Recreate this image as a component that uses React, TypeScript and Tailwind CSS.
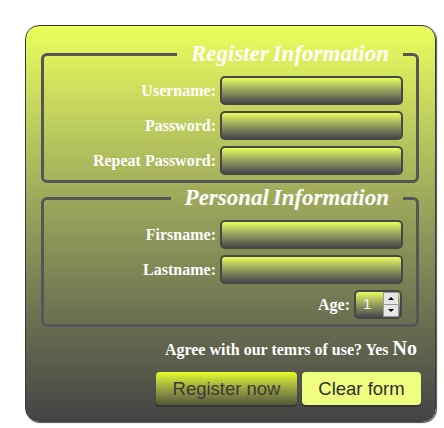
import React from "react";

const serif = "font-['Liberation_Serif','Times_New_Roman',serif]";
const sans = "font-['Liberation_Sans',Arial,sans-serif]";

function Field({ label }: { label: string }) {
  return (
    <div className="flex items-center justify-end pr-[13px]">
      <label className={`${serif} mr-[4px] text-[16px] font-bold leading-none text-white`}>{label}</label>
      <div className="h-[29px] w-[183px] rounded-[5px] border-2 border-[#474747] bg-gradient-to-b from-[#e8fd5c] to-[#4a4a4a]" />
    </div>
  );
}

function Legend({ children }: { children: React.ReactNode }) {
  return (
    <legend
      className={`${serif} ml-auto mr-[13px] px-[14px] text-[23px] font-bold italic leading-[24px] text-white [word-spacing:-2px]`}
    >
      {children}
    </legend>
  );
}

export default function App() {
  return (
    <div className="h-[428px] w-[444px] bg-white pl-[25px] pt-[25px]">
      <form className="flex h-[397px] w-[411px] flex-col rounded-[14px] border border-[#3a3a3a] bg-gradient-to-b from-[#ebff5c] to-[#444444] pl-[15px] pr-[16px] pt-[16px] shadow-[1px_1px_1px_#555]">
        <fieldset className="rounded-[6px] border-[3px] border-[#565656] px-0 pb-[5px]">
          <Legend>Register Information</Legend>
          <div className="flex flex-col gap-[6px] pt-[10px]">
            <Field label="Username:" />
            <Field label="Password:" />
            <Field label="Repeat Password:" />
          </div>
        </fieldset>

        <fieldset className="mt-[3px] rounded-[6px] border-[3px] border-[#565656] px-0 pb-[5px]">
          <Legend>Personal Information</Legend>
          <div className="flex flex-col gap-[6px] pt-[10px]">
            <Field label="Firsname:" />
            <Field label="Lastname:" />
            <div className="flex items-center justify-end pr-[14px]">
              <label className={`${serif} mr-[4px] text-[16px] font-bold leading-none text-white`}>Age:</label>
              <div className="flex h-[29px] w-[48px] items-center rounded-[5px] border-2 border-[#474747] bg-gradient-to-b from-[#e8fd5c] to-[#4a4a4a] pl-[7px] pr-[1px]">
                <span className={`${sans} flex-1 text-[15px] text-[#f4f4f4]`}>1</span>
                <div className="flex h-[25px] w-[16px] flex-col border border-[#9a9a9a] bg-[#f2f2f2]">
                  <div className="flex flex-1 items-center justify-center border-b border-[#9a9a9a] bg-[#e6e6e6]">
                    <div className="h-0 w-0 border-x-[3px] border-b-[3px] border-x-transparent border-b-black" />
                  </div>
                  <div className="flex flex-1 items-center justify-center bg-[#e6e6e6]">
                    <div className="h-0 w-0 border-x-[3px] border-t-[3px] border-x-transparent border-t-black" />
                  </div>
                </div>
              </div>
            </div>
          </div>
        </fieldset>

        <p className={`${serif} mr-[2px] mt-[11px] text-right text-[16px] font-bold leading-[20px] text-white`}>
          Agree with our temrs of use? Yes <span className="text-[20px]">No</span>
        </p>

        <div className="-mr-[2px] mt-[12px] flex justify-end gap-[5px]">
          <button
            type="button"
            className={`${sans} h-[33px] w-[141px] rounded-[4px] bg-gradient-to-b from-[#e4fc22] to-[#55573a] text-[18.5px] text-[#3a3a3a] shadow-[0_2px_1px_#333]`}
          >
            Register now
          </button>
          <button
            type="button"
            className={`${sans} h-[33px] w-[119px] rounded-[4px] bg-[#eeff80] text-[18.5px] text-[#2e2e2e] shadow-[0_2px_1px_#333]`}
          >
            Clear form
          </button>
        </div>
      </form>
    </div>
  );
}
